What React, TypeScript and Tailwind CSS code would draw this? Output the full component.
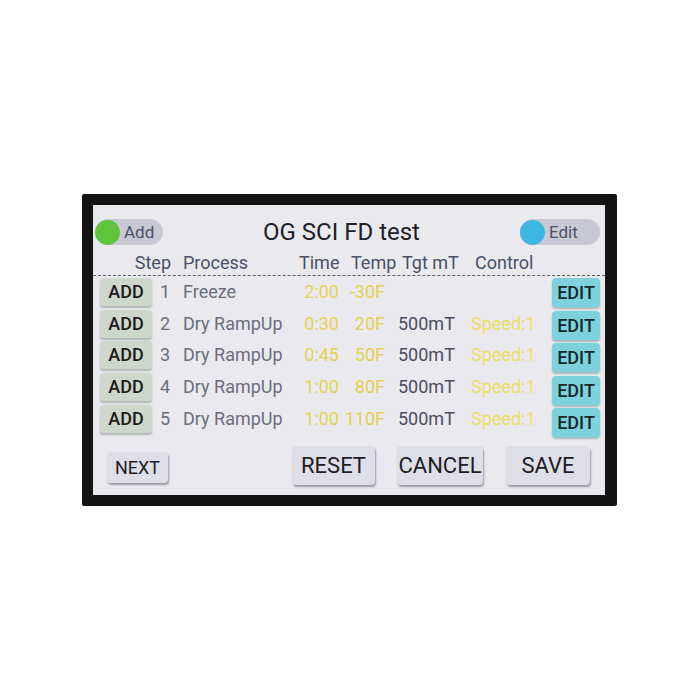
import React from 'react';

// Freeze-dryer recipe screen (photo of a touch panel)
const steps = [
  { n: 1, process: 'Freeze', time: '2:00', temp: '-30F', tgt: '', ctrl: '' },
  { n: 2, process: 'Dry RampUp', time: '0:30', temp: '20F', tgt: '500mT', ctrl: 'Speed:1' },
  { n: 3, process: 'Dry RampUp', time: '0:45', temp: '50F', tgt: '500mT', ctrl: 'Speed:1' },
  { n: 4, process: 'Dry RampUp', time: '1:00', temp: '80F', tgt: '500mT', ctrl: 'Speed:1' },
  { n: 5, process: 'Dry RampUp', time: '1:00', temp: '110F', tgt: '500mT', ctrl: 'Speed:1' },
];

const Toggle = ({ label, dot, width }: { label: string; dot: string; width: string }) => (
  <div className={`flex items-center h-[26px] ${width} rounded-full bg-[#c9c9d5]`}>
    <span className={`w-[25px] h-[25px] rounded-full ${dot}`} />
    <span className="ml-[4px] text-[17px] leading-none text-[#4d4f66]">{label}</span>
  </div>
);

const PanelButton = ({ label, className }: { label: string; className: string }) => (
  <div
    className={`flex items-center justify-center rounded-[4px] bg-[#dedee7] text-[#1c1c22] shadow-[1px_2px_2px_rgba(60,60,80,0.45)] ${className}`}
  >
    {label}
  </div>
);

export default function App() {
  return (
    <div className="w-[700px] h-[700px] bg-white pt-[194px] pl-[82px] font-['Roboto',sans-serif]">
      {/* bezel */}
      <div className="w-[535px] h-[312px] bg-[#141414] rounded-[2px] pt-[11px] pl-[11px]">
        {/* screen */}
        <div className="w-[512px] h-[290px] bg-[#eaeaee] flex flex-col">
          {/* top bar */}
          <div className="flex items-center h-[28px] mt-[13px] pl-[2px] pr-[5px]">
            <Toggle label="Add" dot="bg-[#5dc43b]" width="w-[68px]" />
            <div className="flex-1 text-center text-[24px] leading-none text-[#202029]">OG SCI FD test</div>
            <Toggle label="Edit" dot="bg-[#3db6e2]" width="w-[80px]" />
          </div>

          {/* column headings */}
          <div className="flex items-center h-[22px] mt-[6px] text-[18px] leading-none text-[#4a4f68] whitespace-nowrap">
            <span className="w-[78px] text-right">Step</span>
            <span className="ml-[12px] w-[116px]">Process</span>
            <span className="w-[52px]">Time</span>
            <span className="w-[51px]">Temp</span>
            <span className="w-[73px]">Tgt mT</span>
            <span>Control</span>
          </div>
          <div className="h-0 border-t border-dashed border-[#5e5e68] mt-[1px]" />

          {/* step table */}
          <div className="flex">
            <div className="flex flex-col w-[459px]">
              {steps.map((s) => (
                <div key={s.n} className="flex items-center h-[31.75px] text-[18px] leading-none whitespace-nowrap">
                  <div className="ml-[7px] w-[52px] h-[28px] flex items-center justify-center rounded-[3px] bg-[#ced7cb] text-[18px] font-medium text-[#1a1a1a] shadow-[0_2px_2px_rgba(70,80,70,0.35)]">
                    ADD
                  </div>
                  <span className="w-[18px] text-right text-[#6b6d7d]">{s.n}</span>
                  <span className="ml-[13px] w-[116px] text-[#6b6d7d]">{s.process}</span>
                  <span className="w-[40px] text-right text-[#e4d358]">{s.time}</span>
                  <span className="w-[46px] text-right text-[#e4cf52]">{s.temp}</span>
                  <span className="ml-[13px] w-[73px] text-[#4b4d60]">{s.tgt}</span>
                  <span className="w-[81px] text-[#ecde62]">{s.ctrl}</span>
                </div>
              ))}
            </div>
            <div className="flex flex-col gap-[3.5px] pt-[2px]">
              {steps.map((s) => (
                <div
                  key={s.n}
                  className="w-[48px] h-[29px] flex items-center justify-center rounded-[4px] bg-[#7dd2de] text-[18px] font-medium text-[#15262c] shadow-[0_2px_2px_rgba(40,90,100,0.35)]"
                >
                  EDIT
                </div>
              ))}
            </div>
          </div>

          {/* bottom actions */}
          <div className="flex items-center h-[39px] mt-[9px] pl-[14px]">
            <PanelButton label="NEXT" className="w-[61px] h-[31px] mt-[3px] text-[18px]" />
            <PanelButton label="RESET" className="ml-[124px] w-[83px] h-[39px] text-[22px]" />
            <PanelButton label="CANCEL" className="ml-[22px] w-[86px] h-[39px] text-[22px]" />
            <PanelButton label="SAVE" className="ml-[23px] w-[84px] h-[39px] text-[22px]" />
          </div>
        </div>
      </div>
    </div>
  );
}
